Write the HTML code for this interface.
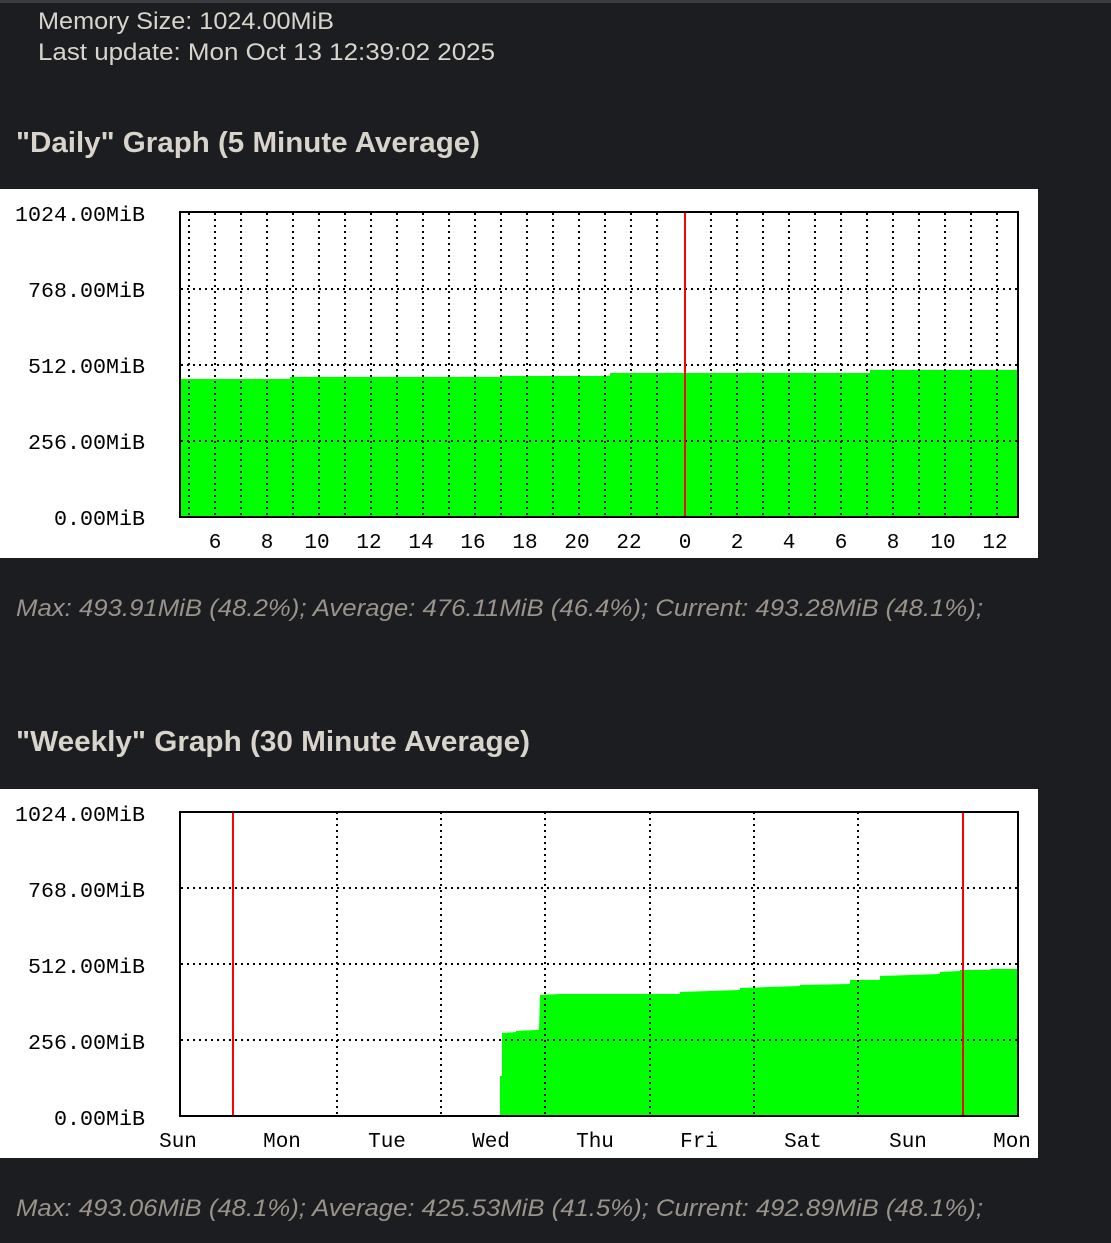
<!DOCTYPE html>
<html><head><meta charset="utf-8"><style>
html,body{margin:0;padding:0;background:#1b1d20;}
svg{display:block}
</style></head><body>
<svg width="1111" height="1243" xmlns="http://www.w3.org/2000/svg">
<rect width="1111" height="1243" fill="#1b1d20"/>
<rect width="1111" height="3" fill="#3a3c40"/>
<g font-family="Liberation Sans, DejaVu Sans, sans-serif" fill="#d8d4cc">
<text x="38" y="29" font-size="24" textLength="296" lengthAdjust="spacingAndGlyphs">Memory Size: 1024.00MiB</text>
<text x="38" y="60" font-size="24" textLength="457" lengthAdjust="spacingAndGlyphs">Last update: Mon Oct 13 12:39:02 2025</text>
<text x="16" y="152" font-size="29" font-weight="bold" textLength="464" lengthAdjust="spacingAndGlyphs">"Daily" Graph (5 Minute Average)</text>
<text x="16" y="751" font-size="29" font-weight="bold" textLength="514" lengthAdjust="spacingAndGlyphs">"Weekly" Graph (30 Minute Average)</text>
</g>
<g font-family="Liberation Sans, DejaVu Sans, sans-serif" font-style="italic" fill="#9a938a" font-size="24">
<text x="16" y="616" textLength="967" lengthAdjust="spacingAndGlyphs">Max: 493.91MiB (48.2%); Average: 476.11MiB (46.4%); Current: 493.28MiB (48.1%);</text>
<text x="16" y="1216" textLength="967" lengthAdjust="spacingAndGlyphs">Max: 493.06MiB (48.1%); Average: 425.53MiB (41.5%); Current: 492.89MiB (48.1%);</text>
</g>

<!-- Daily -->
<rect x="0" y="189" width="1038" height="369" fill="#fff"/>
<polygon fill="#00ff00" points="181,516 181,379 290,379 290,377 500,377 500,376 610,376 610,373 870,373 870,370 1017,370 1017,516"/>
<g stroke="#000" stroke-width="2" stroke-dasharray="2,4" fill="none">
<path d="M181,289H1017M181,365H1017M181,441H1017"/>
<path d="M189,213V516M215,213V516M241,213V516M267,213V516M293,213V516M319,213V516M345,213V516M371,213V516M397,213V516M423,213V516M449,213V516M475,213V516M501,213V516M527,213V516M553,213V516M579,213V516M605,213V516M631,213V516M657,213V516M711,213V516M737,213V516M763,213V516M789,213V516M815,213V516M841,213V516M867,213V516M893,213V516M919,213V516M945,213V516M971,213V516M997,213V516"/>
</g>
<line x1="685" y1="212" x2="685" y2="516" stroke="#f00" stroke-width="2"/>
<rect x="180" y="212" width="838" height="305" fill="none" stroke="#000" stroke-width="2"/>
<g font-family="Liberation Mono, DejaVu Sans Mono, monospace" font-size="21" fill="#000">
<text x="145" y="221" text-anchor="end" textLength="130" lengthAdjust="spacingAndGlyphs">1024.00MiB</text>
<text x="145" y="297" text-anchor="end" textLength="117" lengthAdjust="spacingAndGlyphs">768.00MiB</text>
<text x="145" y="373" text-anchor="end" textLength="117" lengthAdjust="spacingAndGlyphs">512.00MiB</text>
<text x="145" y="449" text-anchor="end" textLength="117" lengthAdjust="spacingAndGlyphs">256.00MiB</text>
<text x="145" y="525" text-anchor="end" textLength="91" lengthAdjust="spacingAndGlyphs">0.00MiB</text>
<g text-anchor="middle">
<text x="215" y="548">6</text><text x="267" y="548">8</text><text x="317" y="548">10</text><text x="369" y="548">12</text><text x="421" y="548">14</text><text x="473" y="548">16</text><text x="525" y="548">18</text><text x="577" y="548">20</text><text x="629" y="548">22</text><text x="685" y="548">0</text><text x="737" y="548">2</text><text x="789" y="548">4</text><text x="841" y="548">6</text><text x="893" y="548">8</text><text x="943" y="548">10</text><text x="995" y="548">12</text>
</g>
</g>

<!-- Weekly -->
<rect x="0" y="789" width="1038" height="369" fill="#fff"/>
<polygon fill="#00ff00" points="500,1116 500,1076 502,1076 502,1033 516,1032 516,1031 536,1030 536,1030 539,1030 540,995 560,994 680,994 680,992 740,990 740,988 800,986 800,985 850,984 850,980 880,980 880,976 940,974 940,972 960,971 960,970 990,970 990,969 1017,969 1017,1116"/>
<g stroke="#000" stroke-width="2" stroke-dasharray="2,4" fill="none">
<path d="M181,888H1017M181,964H1017M181,1040H1017"/>
<path d="M337,812V1116M441,812V1116M545,812V1116M650,812V1116M754,812V1116M858,812V1116"/>
</g>
<path d="M233,812V1116M963,812V1116" stroke="#f00" stroke-width="2"/>
<rect x="180" y="812" width="838" height="304" fill="none" stroke="#000" stroke-width="2"/>
<g font-family="Liberation Mono, DejaVu Sans Mono, monospace" font-size="21" fill="#000">
<text x="145" y="821" text-anchor="end" textLength="130" lengthAdjust="spacingAndGlyphs">1024.00MiB</text>
<text x="145" y="897" text-anchor="end" textLength="117" lengthAdjust="spacingAndGlyphs">768.00MiB</text>
<text x="145" y="973" text-anchor="end" textLength="117" lengthAdjust="spacingAndGlyphs">512.00MiB</text>
<text x="145" y="1049" text-anchor="end" textLength="117" lengthAdjust="spacingAndGlyphs">256.00MiB</text>
<text x="145" y="1125" text-anchor="end" textLength="91" lengthAdjust="spacingAndGlyphs">0.00MiB</text>
<g text-anchor="middle">
<text x="178" y="1147">Sun</text><text x="282" y="1147">Mon</text><text x="387" y="1147">Tue</text><text x="491" y="1147">Wed</text><text x="595" y="1147">Thu</text><text x="699" y="1147">Fri</text><text x="803" y="1147">Sat</text><text x="908" y="1147">Sun</text><text x="1012" y="1147">Mon</text>
</g>
</g>
</svg>
</body></html>
